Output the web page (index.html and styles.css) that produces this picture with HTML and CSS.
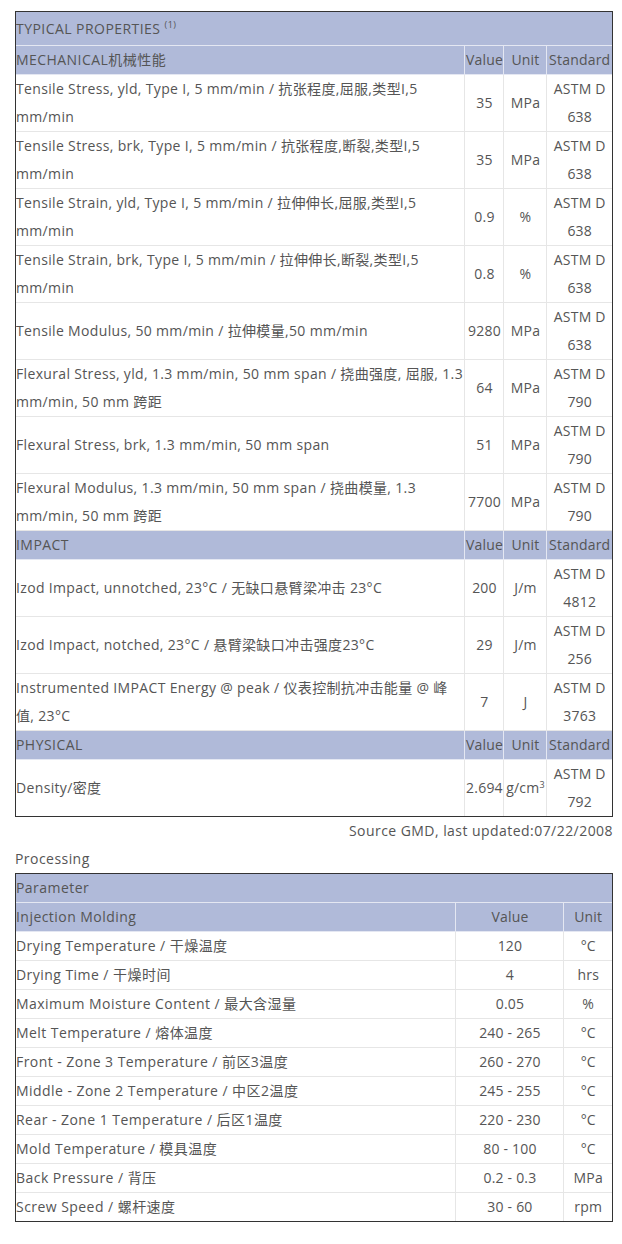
FILE: index.html
```html
<!DOCTYPE html>
<html lang="en">
<head>
  <meta charset="utf-8">
  <title>Typical Properties</title>
  <link rel="stylesheet" href="styles.css">
</head>
<body>
  <div class="page">
    <div class="table-wrap">
      <table class="props">
        <colgroup>
          <col>
          <col class="col-value">
          <col class="col-unit">
          <col class="col-std">
        </colgroup>
        <tr class="title-row">
          <th colspan="4">TYPICAL PROPERTIES <sup>(1)</sup></th>
        </tr>
        <tr class="group-row">
          <th>MECHANICAL机械性能</th>
          <th class="c">Value</th>
          <th class="c">Unit</th>
          <th class="c">Standard</th>
        </tr>
        <tr>
          <td>Tensile Stress, yld, Type I, 5 mm/min / 抗张程度,屈服,类型I,5 mm/min</td>
          <td class="c">35</td>
          <td class="c">MPa</td>
          <td class="c">ASTM D 638</td>
        </tr>
        <tr>
          <td>Tensile Stress, brk, Type I, 5 mm/min / 抗张程度,断裂,类型I,5 mm/min</td>
          <td class="c">35</td>
          <td class="c">MPa</td>
          <td class="c">ASTM D 638</td>
        </tr>
        <tr>
          <td>Tensile Strain, yld, Type I, 5 mm/min / 拉伸伸长,屈服,类型I,5 mm/min</td>
          <td class="c">0.9</td>
          <td class="c">%</td>
          <td class="c">ASTM D 638</td>
        </tr>
        <tr>
          <td>Tensile Strain, brk, Type I, 5 mm/min / 拉伸伸长,断裂,类型I,5 mm/min</td>
          <td class="c">0.8</td>
          <td class="c">%</td>
          <td class="c">ASTM D 638</td>
        </tr>
        <tr>
          <td>Tensile Modulus, 50 mm/min / 拉伸模量,50 mm/min</td>
          <td class="c">9280</td>
          <td class="c">MPa</td>
          <td class="c">ASTM D 638</td>
        </tr>
        <tr>
          <td>Flexural Stress, yld, 1.3 mm/min, 50 mm span / 挠曲强度, 屈服, 1.3 mm/min, 50 mm 跨距</td>
          <td class="c">64</td>
          <td class="c">MPa</td>
          <td class="c">ASTM D 790</td>
        </tr>
        <tr>
          <td>Flexural Stress, brk, 1.3 mm/min, 50 mm span</td>
          <td class="c">51</td>
          <td class="c">MPa</td>
          <td class="c">ASTM D 790</td>
        </tr>
        <tr>
          <td>Flexural Modulus, 1.3 mm/min, 50 mm span / 挠曲模量, 1.3 mm/min, 50 mm 跨距</td>
          <td class="c">7700</td>
          <td class="c">MPa</td>
          <td class="c">ASTM D 790</td>
        </tr>
        <tr class="group-row">
          <th>IMPACT</th>
          <th class="c">Value</th>
          <th class="c">Unit</th>
          <th class="c">Standard</th>
        </tr>
        <tr>
          <td>Izod Impact, unnotched, 23°C / 无缺口悬臂梁冲击 23°C</td>
          <td class="c">200</td>
          <td class="c">J/m</td>
          <td class="c">ASTM D 4812</td>
        </tr>
        <tr>
          <td>Izod Impact, notched, 23°C / 悬臂梁缺口冲击强度23°C</td>
          <td class="c">29</td>
          <td class="c">J/m</td>
          <td class="c">ASTM D 256</td>
        </tr>
        <tr>
          <td>Instrumented IMPACT Energy @ peak / 仪表控制抗冲击能量 @ 峰值, 23°C</td>
          <td class="c">7</td>
          <td class="c">J</td>
          <td class="c">ASTM D 3763</td>
        </tr>
        <tr class="group-row">
          <th>PHYSICAL</th>
          <th class="c">Value</th>
          <th class="c">Unit</th>
          <th class="c">Standard</th>
        </tr>
        <tr>
          <td>Density/密度</td>
          <td class="c">2.694</td>
          <td class="c">g/cm<sup class="pow">3</sup></td>
          <td class="c">ASTM D 792</td>
        </tr>
      </table>
    </div>

    <p class="source">Source GMD, last updated:07/22/2008</p>

    <p class="section-title">Processing</p>

    <div class="table-wrap">
      <table class="proc">
        <colgroup>
          <col>
          <col class="col-pvalue">
          <col class="col-punit">
        </colgroup>
        <tr class="title-row">
          <th colspan="3">Parameter</th>
        </tr>
        <tr class="group-row">
          <th>Injection Molding</th>
          <th class="c">Value</th>
          <th class="c">Unit</th>
        </tr>
        <tr><td>Drying Temperature / 干燥温度</td><td class="c">120</td><td class="c">°C</td></tr>
        <tr><td>Drying Time / 干燥时间</td><td class="c">4</td><td class="c">hrs</td></tr>
        <tr><td>Maximum Moisture Content / 最大含湿量</td><td class="c">0.05</td><td class="c">%</td></tr>
        <tr><td>Melt Temperature / 熔体温度</td><td class="c">240 - 265</td><td class="c">°C</td></tr>
        <tr><td>Front - Zone 3 Temperature / 前区3温度</td><td class="c">260 - 270</td><td class="c">°C</td></tr>
        <tr><td>Middle - Zone 2 Temperature / 中区2温度</td><td class="c">245 - 255</td><td class="c">°C</td></tr>
        <tr><td>Rear - Zone 1 Temperature / 后区1温度</td><td class="c">220 - 230</td><td class="c">°C</td></tr>
        <tr><td>Mold Temperature / 模具温度</td><td class="c">80 - 100</td><td class="c">°C</td></tr>
        <tr><td>Back Pressure / 背压</td><td class="c">0.2 - 0.3</td><td class="c">MPa</td></tr>
        <tr><td>Screw Speed / 螺杆速度</td><td class="c">30 - 60</td><td class="c">rpm</td></tr>
      </table>
    </div>
  </div>
</body>
</html>
```
FILE: styles.css
```css
body {
  margin: 0;
  padding: 0;
  background-color: #fff;
  font-family: "Open Sans", "Noto Sans CJK SC", sans-serif;
  font-size: 14px;
  letter-spacing: 0.45px;
  color: #555;
}

.page {
  padding: 11px 9px 20px 15px;
}

.table-wrap {
  border: 1px solid #333;
}

table {
  width: 100%;
  border-collapse: collapse;
  table-layout: fixed;
  border-style: hidden;
}

th,
td {
  padding: 0;
  line-height: 28px;
  text-align: left;
  vertical-align: middle;
  font-weight: normal;
  border: 1px solid #e6e6e6;
}

.props td {
  letter-spacing: 0.34px;
}

th {
  background-color: #b0bad9;
  border-color: #e4e7f2;
}

.props td.c,
.c {
  text-align: center;
  letter-spacing: 0.2px;
}

.props .title-row th {
  line-height: 33px;
}

sup {
  font-size: 9px;
  line-height: 0;
  vertical-align: 6px;
}

.pow {
  font-size: 9px;
  vertical-align: 5px;
}

.col-value { width: 39px; }
.col-unit { width: 43px; }
.col-std { width: 65px; }

.col-pvalue { width: 108px; }
.col-punit { width: 48px; }

.source {
  margin: 4px 0 0;
  text-align: right;
  line-height: 20px;
}

.section-title {
  margin: 8px 0 4px;
  line-height: 20px;
}
```
